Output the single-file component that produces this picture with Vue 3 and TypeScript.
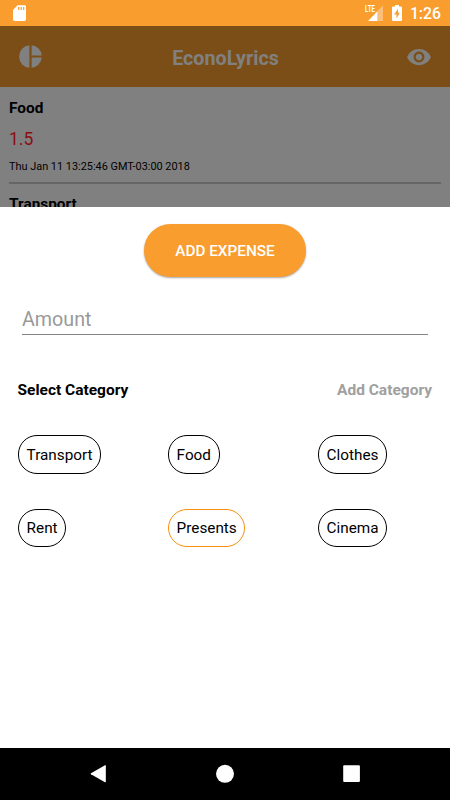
<script setup lang="ts">
import { ref } from 'vue'

interface Expense {
  category: string
  amount: string
  date: string
}

const expenses: Expense[] = [
  { category: 'Food', amount: '1.5', date: 'Thu Jan 11 13:25:46 GMT-03:00 2018' },
  { category: 'Transport', amount: '', date: '' },
]

const categories: string[] = ['Transport', 'Food', 'Clothes', 'Rent', 'Presents', 'Cinema']
const selected = ref('Presents')
const amount = ref('')
</script>

<template>
  <div class="screen">
    <div class="status">
      <svg class="sd" width="13" height="17" viewBox="0 0 13 17">
        <path d="M4.6 0.3H11.6Q13 0.3 13 1.7V14.6Q13 16 11.6 16H1.4Q0 16 0 14.6V5Z" fill="#fff" />
        <path d="M5.7 2V5M8.2 2V5M10.7 2V5" stroke="#f99d2f" stroke-width="1.2" />
      </svg>
      <div class="status-right">
        <span class="lte">LTE</span>
        <svg class="signal" width="15" height="16" viewBox="0 0 15 16">
          <path d="M15 0.5V16H7V8.2Z" fill="#fff" fill-opacity=".35" />
          <path d="M9.3 6.5V16H0Z" fill="#fff" />
        </svg>
        <svg class="battery" width="10" height="16" viewBox="0 0 10 16">
          <path d="M3 0H7V1.6H9Q10 1.6 10 2.6V15Q10 16 9 16H1Q0 16 0 15V2.6Q0 1.6 1 1.6H3Z" fill="#fff" />
          <path d="M6 3.8L2.2 9.4H4.5V13.4L7.8 7.7H6Z" fill="#f99d2f" />
        </svg>
        <span class="clock">1:26</span>
      </div>
    </div>

    <div class="page">
      <header class="bar">
        <svg class="pie" width="23" height="23" viewBox="0 0 23 23" fill="#808080">
          <path d="M10.4 0.2V22.8A11.35 11.35 0 0 1 10.4 0.2Z" />
          <path d="M12.6 0.2A11.35 11.35 0 0 1 22.8 10.4H12.6Z" />
          <path d="M12.6 12.6H22.8A11.35 11.35 0 0 1 12.6 22.8Z" />
        </svg>
        <h1>EconoLyrics</h1>
        <svg class="eye" width="26" height="26" viewBox="0 0 24 24" fill="#808080">
          <path d="M12 4.5C7 4.5 2.73 7.61 1 12c1.73 4.39 6 7.5 11 7.5s9.27-3.11 11-7.5c-1.73-4.39-6-7.5-11-7.5zM12 17c-2.76 0-5-2.24-5-5s2.24-5 5-5 5 2.24 5 5-2.24 5-5 5zm0-8c-1.66 0-3 1.34-3 3s1.34 3 3 3 3-1.34 3-3-1.34-3-3-3z" />
        </svg>
      </header>
      <article v-for="item in expenses" :key="item.category" class="expense">
        <div class="name">{{ item.category }}</div>
        <div class="value">{{ item.amount }}</div>
        <div class="date">{{ item.date }}</div>
      </article>
    </div>

    <section class="sheet">
      <button class="add">ADD EXPENSE</button>
      <input v-model="amount" class="amount" placeholder="Amount" />
      <div class="heading">
        <span>Select Category</span>
        <span class="add-category">Add Category</span>
      </div>
      <div class="grid">
        <div v-for="name in categories" :key="name" class="cell">
          <button class="chip" :class="{ active: name === selected }" @click="selected = name">{{ name }}</button>
        </div>
      </div>
    </section>

    <nav class="nav">
      <svg width="450" height="52" viewBox="0 0 450 52" fill="#fff">
        <path d="M91 25.2L105 17.2Q105.8 16.8 105.8 17.7V33.7Q105.8 34.6 105 34.2L91 26.2Q90.2 25.7 91 25.2Z" />
        <circle cx="225" cy="25.8" r="9" />
        <rect x="343.2" y="17.3" width="16.7" height="16.7" rx="1" />
      </svg>
    </nav>
  </div>
</template>

<style>
body {
  margin: 0;
}
</style>

<style scoped>
.screen {
  width: 450px;
  height: 800px;
  display: flex;
  flex-direction: column;
  overflow: hidden;
  background: #fff;
  color: #000;
  font-family: Roboto, "Liberation Sans", sans-serif;
}
.status {
  height: 26px;
  flex: none;
  box-sizing: border-box;
  display: flex;
  justify-content: space-between;
  align-items: flex-start;
  padding: 5px 9px 0 13px;
  background: #f99d2f;
  color: #fff;
}
.status-right {
  display: flex;
  align-items: flex-start;
}
.lte {
  font-size: 9px;
  font-weight: 700;
  line-height: 9px;
  width: 14px;
  margin-right: -11px;
  transform: scaleX(0.68);
  transform-origin: left;
}
.signal {
  margin-right: 9px;
}
.battery {
  margin-right: 8px;
}
.clock {
  font-size: 15.8px;
  font-weight: 500;
  line-height: 18px;
}
.page {
  height: 181px;
  flex: none;
  overflow: hidden;
  background: #808080;
}
.bar {
  height: 61px;
  box-sizing: border-box;
  padding: 0 18px 0 19px;
  display: flex;
  align-items: center;
  justify-content: space-between;
  background: #7c4e17;
  color: #808080;
}
h1 {
  margin: 4px 0 0 3px;
  font-size: 19.7px;
  line-height: 24px;
}
.expense {
  margin: 0 9px;
  height: 97px;
  box-sizing: border-box;
  padding-top: 11px;
  border-bottom: 2px solid #666;
}
.expense + .expense {
  padding-top: 10px;
}
.name {
  font-size: 15.4px;
  font-weight: 700;
  line-height: 20px;
}
.value {
  margin-top: 9px;
  height: 24px;
  font-size: 17.5px;
  line-height: 24px;
  color: #8b0f0f;
}
.date {
  margin-top: 9px;
  font-size: 10.9px;
  line-height: 14px;
}
.sheet {
  flex: 1;
  display: flex;
  flex-direction: column;
  padding: 17px 17px 0;
}
button {
  font-family: inherit;
  margin: 0;
}
.add {
  align-self: center;
  width: 162px;
  height: 53px;
  border: 0;
  border-radius: 27px;
  padding: 0;
  background: #f99d2f;
  color: #fff;
  font-size: 15.3px;
  font-weight: 500;
  box-shadow: 0 1px 2px rgba(0, 0, 0, 0.35);
}
.amount {
  margin: 24px 5px 0;
  height: 34px;
  box-sizing: border-box;
  padding: 3px 0 0;
  border: 0;
  border-bottom: 1px solid #848484;
  border-radius: 0;
  outline: 0;
  background: transparent;
  font-family: inherit;
  font-size: 19.7px;
}
.amount::placeholder {
  color: #999;
  opacity: 1;
}
.heading {
  display: flex;
  justify-content: space-between;
  margin: 45px 1px 0 0.5px;
  font-size: 15.5px;
  font-weight: 700;
  line-height: 20px;
}
.add-category {
  color: #a0a0a0;
}
.grid {
  display: grid;
  grid-template-columns: repeat(3, 150px);
  row-gap: 34.5px;
  margin: 35px 0 0 0.6px;
}
.cell {
  height: 39px;
}
.chip {
  height: 38.5px;
  box-sizing: border-box;
  padding: 1px 7.7px 0 8px;
  border: 1.1px solid #000;
  border-radius: 19px;
  background: #fff;
  color: #000;
  font-size: 15.3px;
}
.chip.active {
  border-color: #f98f0f;
}
.nav {
  height: 52px;
  flex: none;
  background: #000;
}
.nav svg {
  display: block;
}
</style>
